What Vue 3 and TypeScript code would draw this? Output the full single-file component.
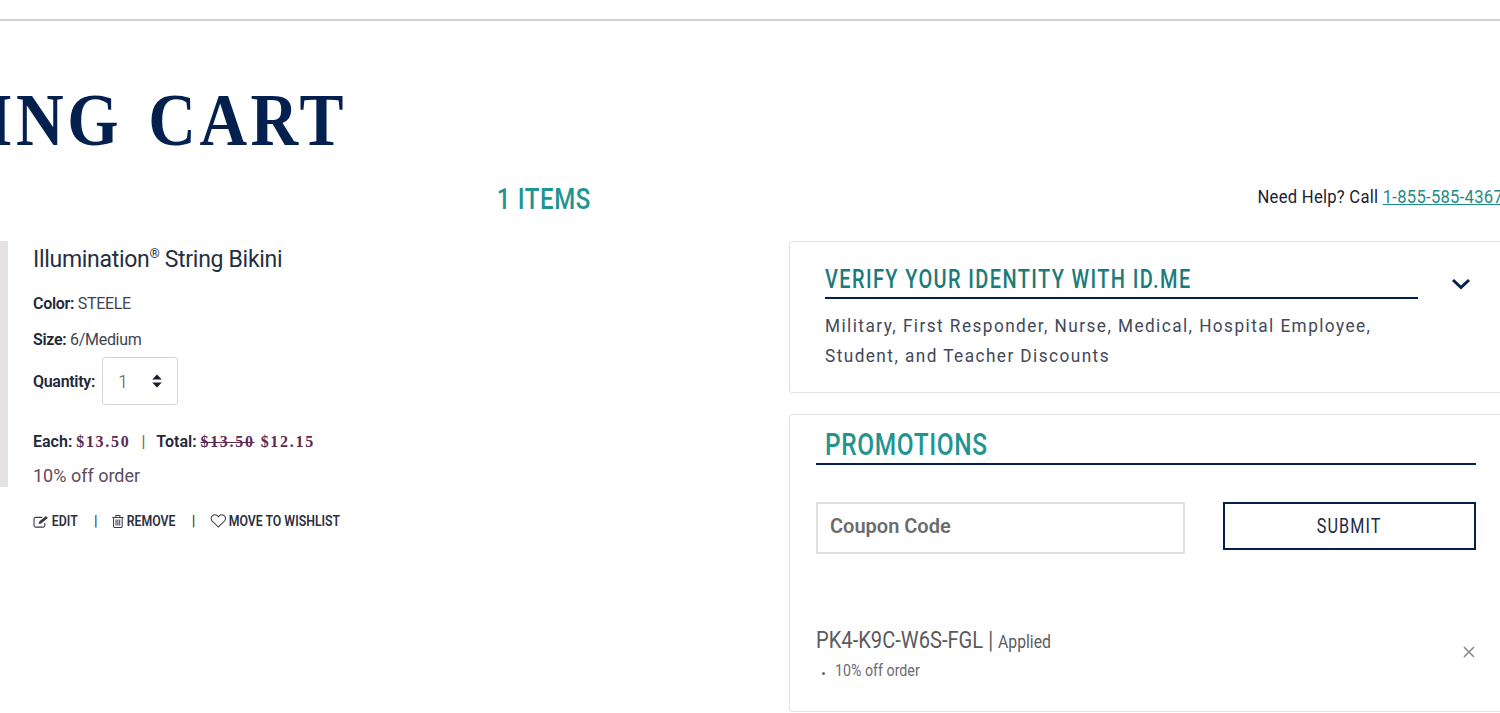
<script setup lang="ts">
import { ref } from 'vue';

const quantity = ref(1);
const coupon = ref('');
const phone = '1-855-585-4367';
</script>

<template>
  <div class="viewport">
    <div class="page">
      <div class="top-rule"></div>
      <h1 class="page-title">SHOPPING CART</h1>

      <div class="count-row">
        <div class="item-count">1 ITEMS</div>
        <div class="help">Need Help? Call <a href="#" class="help-link">{{ phone }}</a></div>
      </div>

      <div class="columns">
        <section class="cart-col">
          <div class="product">
            <div class="product-image"></div>
            <div class="product-info">
              <div class="product-name">Illumination<sup>®</sup> String Bikini</div>
              <div class="attr first"><b>Color:</b> STEELE</div>
              <div class="attr"><b>Size:</b> 6/Medium</div>
              <div class="qty-row">
                <b>Quantity:</b>
                <div class="qty-select">
                  <span>{{ quantity }}</span>
                  <svg width="10" height="14" viewBox="0 0 10 14"><path d="M5 0.5 9.8 5.5H.2zM5 13.5 .2 8.5h9.6z" fill="#1c1c2b"/></svg>
                </div>
              </div>
              <div class="prices">
                <b>Each:</b> <span class="money">$13.50</span>
                <span class="sep">|</span>
                <b>Total:</b> <s class="money">$13.50</s> <span class="money last">$12.15</span>
              </div>
              <div class="discount">10% off order</div>
            </div>
          </div>
          <div class="actions">
            <a href="#" class="action">
              <svg width="20" height="13" viewBox="0 0 16 13" preserveAspectRatio="none" fill="none" stroke="#3a3a4a" stroke-width="1.1"><path d="M11.5 8v2.5a1.6 1.6 0 0 1-1.6 1.6H2.6A1.6 1.6 0 0 1 1 10.5V4a1.6 1.6 0 0 1 1.6-1.6H9"/><path d="M5.5 9 6 6.4 12.6 1l1.9 2L8 8.400z" fill="#3a3a4a" stroke="none"/></svg>
              EDIT
            </a>
            <span class="action-sep">|</span>
            <a href="#" class="action">
              <svg width="15" height="14" viewBox="0 0 12 14" preserveAspectRatio="none" fill="none" stroke="#3a3a4a" stroke-width="1"><path d="M.5 3.500h11M4 3.500V1.500h4v2M1.800 3.500v8.700a1.200 1.200 0 0 0 1.200 1.200h6a1.200 1.200 0 0 0 1.200-1.200V3.500M4.200 5.500v6M6 5.500v6M7.800 5.500v6"/></svg>
              REMOVE
            </a>
            <span class="action-sep">|</span>
            <a href="#" class="action">
              <svg width="20" height="14" viewBox="0 0 16 14" preserveAspectRatio="none" fill="none" stroke="#3a3a4a" stroke-width="1"><path d="M8 13 1.800 6.800A3.500 3.500 0 0 1 1 4.400 3.600 3.600 0 0 1 4.600.8C6 .8 7.200 1.600 8 2.800 8.800 1.600 10 .8 11.400.8A3.600 3.600 0 0 1 15 4.400c0 .9-.3 1.700-.8 2.400z"/></svg>
              MOVE TO WISHLIST
            </a>
          </div>
        </section>

        <aside class="side-col">
          <div class="card verify">
            <div class="verify-head">
              <h2 class="verify-title"><span>VERIFY YOUR IDENTITY WITH ID.ME</span></h2>
              <svg class="chevron" width="20" height="12" viewBox="0 0 20 12" fill="none" stroke="#03204f" stroke-width="3"><path d="M2 2l8 7.500 8-7.500"/></svg>
            </div>
            <p class="verify-text">Military, First Responder, Nurse, Medical, Hospital Employee,<br>Student, and Teacher Discounts</p>
          </div>

          <div class="card promos">
            <h2 class="promo-title"><span>PROMOTIONS</span></h2>
            <form class="coupon-form" @submit.prevent>
              <input v-model="coupon" class="coupon-input" type="text" placeholder="Coupon Code" />
              <button type="submit" class="submit-btn"><span>SUBMIT</span></button>
            </form>
            <div class="applied">
              <div>
                <div class="applied-code">PK4-K9C-W6S-FGL | <span class="applied-tag">Applied</span></div>
                <ul class="applied-list"><li><span>10% off order</span></li></ul>
              </div>
              <svg class="remove-x" width="12" height="12" viewBox="0 0 12 12" stroke="#8a8a8e" stroke-width="1.600"><path d="M1 1l10 10M11 1 1 11"/></svg>
            </div>
          </div>
        </aside>
      </div>
    </div>
  </div>
</template>

<style scoped>
.viewport { background: #fff; color: #1c2233; font-family: Roboto, "Liberation Sans", sans-serif; height: 713px; overflow: hidden; width: 1500px; }
.page { margin-left: -300px; width: 1803px; }
.top-rule { background: #d2d2d2; height: 2px; margin-top: 19px; }
.page-title { color: #03204f; font-family: "Liberation Serif", serif; font-size: 75px; font-weight: 700; letter-spacing: 4px; line-height: 80px; margin: 59px 0 0 -253px; text-align: right; transform: scaleX(0.88); transform-origin: right center; white-space: nowrap; width: 900px; word-spacing: 7px; }
.count-row { align-items: center; display: grid; grid-template-columns: 1089px 714px; height: 40px; margin-top: 18px; }
.item-count { color: #1f9490; font-size: 30px; font-weight: 500; letter-spacing: 0.8px; margin-right: 198px; text-align: right; transform: scaleX(0.8); transform-origin: right center; }
.help { font-size: 19px; letter-spacing: 0.3px; margin-top: -4px; text-align: right; transform: scaleX(0.875); transform-origin: right center; white-space: nowrap; }
.help-link { color: #1f8b88; }
.columns { display: grid; grid-template-columns: 1089px 714px; margin-top: 23px; }
.product { align-items: flex-start; display: flex; }
.product-image { background: #e6e2e3; height: 246px; width: 308px; }
.product-info { padding: 1px 0 0 25px; }
.product-name { color: #1f3044; font-size: 23px; letter-spacing: -0.3px; line-height: 36px; }
.product-name sup { font-size: 13px; line-height: 0; }
.attr { color: #3f4450; font-size: 16px; letter-spacing: -0.3px; line-height: 36px; }
.attr.first { margin-top: 8px; }
b { color: #23283a; font-weight: 600; }
.qty-row { align-items: center; display: flex; font-size: 16px; gap: 7px; height: 48px; letter-spacing: -0.3px; margin-top: -1px; }
.qty-select { align-items: center; border: 1px solid #d4d4d4; border-radius: 3px; box-sizing: border-box; color: #555; display: flex; font-size: 18px; font-weight: 300; height: 48px; justify-content: space-between; padding: 0 15px; width: 76px; }
.prices { font-size: 16px; line-height: 24px; margin-top: 25px; white-space: nowrap; }
.money { color: #5d2a52; font-family: "Liberation Serif", serif; font-size: 16px; font-weight: 700; letter-spacing: 1.7px; }
.money.last { margin-left: 2px; }
.sep { color: #666; margin: 0 11px; }
.discount { color: #5c4a5e; font-size: 18px; line-height: 28px; margin-top: 8px; }
.actions { align-items: center; display: flex; font-size: 15px; font-weight: 600; margin: 22px 0 0 333px; transform: scaleX(0.82); transform-origin: left center; white-space: nowrap; }
.action { align-items: center; color: #2b3040; display: flex; gap: 3px; text-decoration: none; }
.action-sep { margin: 0 18px 0 20px; }
.card { background: #fff; border: 1px solid #e3e3e3; border-radius: 3px; box-sizing: border-box; width: 714px; }
.verify { height: 152px; padding: 23px 35px 0; }
.verify-head { display: flex; justify-content: space-between; }
.verify-title { border-bottom: 2px solid #03204f; box-sizing: border-box; color: #1b7a7a; flex: 0 0 593px; font-size: 25px; font-weight: 500; height: 34px; letter-spacing: 1.7px; line-height: 30px; margin: 0; }
.verify-title span { display: inline-block; transform: scaleX(0.8); transform-origin: left center; white-space: nowrap; }
.chevron { margin: 13px -4px 0 0; }
.verify-text { color: #42485a; font-size: 19px; letter-spacing: 1.6px; line-height: 30px; margin: 12px 0 0; transform: scaleX(0.905); transform-origin: left center; white-space: nowrap; }
.promos { height: 298px; margin-top: 21px; padding: 11px 26px 0; }
.promo-title { border-bottom: 2px solid #03204f; color: #1f9490; font-size: 32px; font-weight: 500; height: 37px; letter-spacing: 0.8px; line-height: 36px; margin: 0; padding-left: 9px; }
.promo-title span { display: inline-block; transform: scaleX(0.765); transform-origin: left center; white-space: nowrap; }
.coupon-form { align-items: flex-start; display: flex; justify-content: space-between; margin-top: 37px; }
.coupon-input { border: 2px solid #e0e0e0; box-sizing: border-box; font-family: inherit; font-size: 20px; font-weight: 600; height: 52px; outline: none; padding: 0 12px 4px; width: 369px; }
.coupon-input::placeholder { color: #6c6c6c; opacity: 1; }
.submit-btn { background: #fff; border: 2px solid #03204f; color: #1c2a44; font-family: inherit; font-size: 20px; height: 48px; letter-spacing: 1.4px; width: 253px; }
.submit-btn span { display: inline-block; transform: scaleX(0.81); }
.applied { align-items: flex-start; display: flex; justify-content: space-between; margin-top: 73px; }
.applied-code { color: #5a5a60; font-size: 23px; line-height: 28px; transform: scaleX(0.875); transform-origin: left center; white-space: nowrap; }
.applied-tag { font-size: 18px; }
.applied-list { color: #6a6a70; font-size: 16px; line-height: 24px; margin: 3px 0 0; padding-left: 19px; }
.applied-list li::marker { font-size: 11px; }
.applied-list span { display: inline-block; transform: scaleX(0.89); transform-origin: left center; }
.remove-x { margin: 19px 1px 0 0; }
</style>
